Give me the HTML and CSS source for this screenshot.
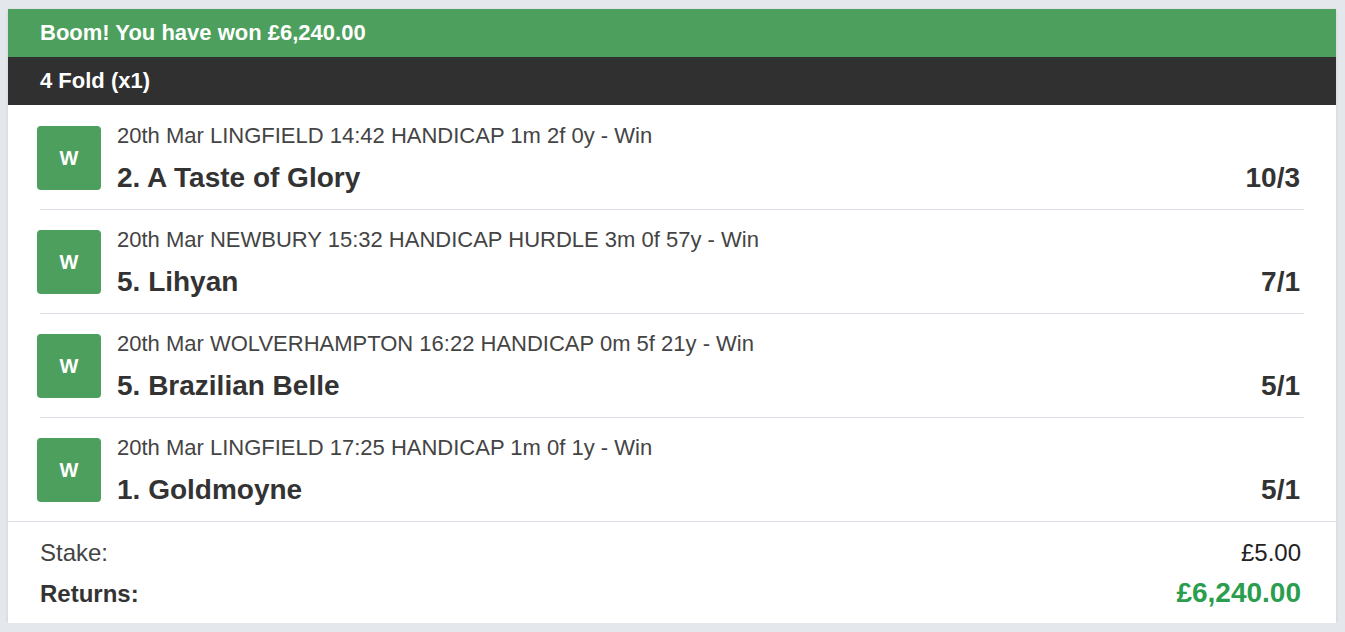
FILE: index.html
```html
<!DOCTYPE html>
<html lang="en">

<head>
  <meta charset="UTF-8" />
  <meta name="viewport" content="width=device-width, initial-scale=1.0" />
  <title>Bet receipt</title>
  <link rel="stylesheet" href="styles.css">
</head>

<body>

  <div class="betslip">
    <div class="banner">Boom! You have won £6,240.00</div>
    <div class="bet-type">4 Fold (x1)</div>

    <div class="legs">
      <div class="leg">
        <div class="result">W</div>
        <div class="leg-info">
          <div class="event">20th Mar LINGFIELD 14:42 HANDICAP 1m 2f 0y - Win</div>
          <div class="selection">
            <span>2. A Taste of Glory</span>
            <span class="odds">10/3</span>
          </div>
        </div>
      </div>

      <div class="leg">
        <div class="result">W</div>
        <div class="leg-info">
          <div class="event">20th Mar NEWBURY 15:32 HANDICAP HURDLE 3m 0f 57y - Win</div>
          <div class="selection">
            <span>5. Lihyan</span>
            <span class="odds">7/1</span>
          </div>
        </div>
      </div>

      <div class="leg">
        <div class="result">W</div>
        <div class="leg-info">
          <div class="event">20th Mar WOLVERHAMPTON 16:22 HANDICAP 0m 5f 21y - Win</div>
          <div class="selection">
            <span>5. Brazilian Belle</span>
            <span class="odds">5/1</span>
          </div>
        </div>
      </div>

      <div class="leg">
        <div class="result">W</div>
        <div class="leg-info">
          <div class="event">20th Mar LINGFIELD 17:25 HANDICAP 1m 0f 1y - Win</div>
          <div class="selection">
            <span>1. Goldmoyne</span>
            <span class="odds">5/1</span>
          </div>
        </div>
      </div>
    </div>

    <div class="totals">
      <div class="total-row">
        <span>Stake:</span>
        <span class="stake">£5.00</span>
      </div>
      <div class="total-row returns">
        <span>Returns:</span>
        <span class="payout">£6,240.00</span>
      </div>
    </div>
  </div>

</body>

</html>
```

FILE: styles.css
```css
body {
  margin: 0;
  padding: 9px 9px 0 8px;
  background-color: #e4e7eb;
  font-family: "Liberation Sans", Arial, sans-serif;
  color: #333;
}
.betslip {
  background-color: #fff;
  box-shadow: 0 1px 3px rgba(0, 0, 0, 0.12);
}
.banner, .bet-type {
  height: 48px;
  box-sizing: border-box;
  display: flex;
  align-items: center;
  padding: 0 0 1px 32px;
  color: #fff;
  font-weight: bold;
  font-size: 22px;
}
.banner {
  background-color: #4c9f5c;
}
.bet-type {
  background-color: #303030;
}
.legs {
  padding: 1px 32px 0;
}
.leg {
  display: flex;
  padding: 20px 0 19px;
  border-bottom: 1px solid #dde2e8;
}
.leg:last-child {
  border-bottom: none;
}
.result {
  width: 64px;
  height: 64px;
  margin-left: -3px;
  flex-shrink: 0;
  border-radius: 4px;
  background-color: #4c9f5c;
  color: #fff;
  font-weight: bold;
  font-size: 20px;
  display: flex;
  align-items: center;
  justify-content: center;
}
.leg-info {
  flex: 1;
  margin-left: 16px;
  margin-right: 4px;
}
.event {
  font-size: 22px;
  color: #444;
  line-height: 24px;
  margin-top: -2px;
}
.selection {
  display: flex;
  justify-content: space-between;
  font-weight: bold;
  font-size: 28px;
  line-height: 28px;
  margin: 16px 0 -2px;
}
.totals {
  border-top: 1px solid #dde2e8;
  padding: 17px 35px 14px 32px;
}
.total-row {
  display: flex;
  justify-content: space-between;
  align-items: baseline;
  font-size: 24px;
  line-height: 28px;
  color: #444;
}
.stake {
  color: #222;
}
.returns {
  margin-top: 10px;
  font-weight: bold;
  color: #333;
}
.payout {
  color: #2a9d4f;
  font-size: 28px;
  line-height: 32px;
}
```
